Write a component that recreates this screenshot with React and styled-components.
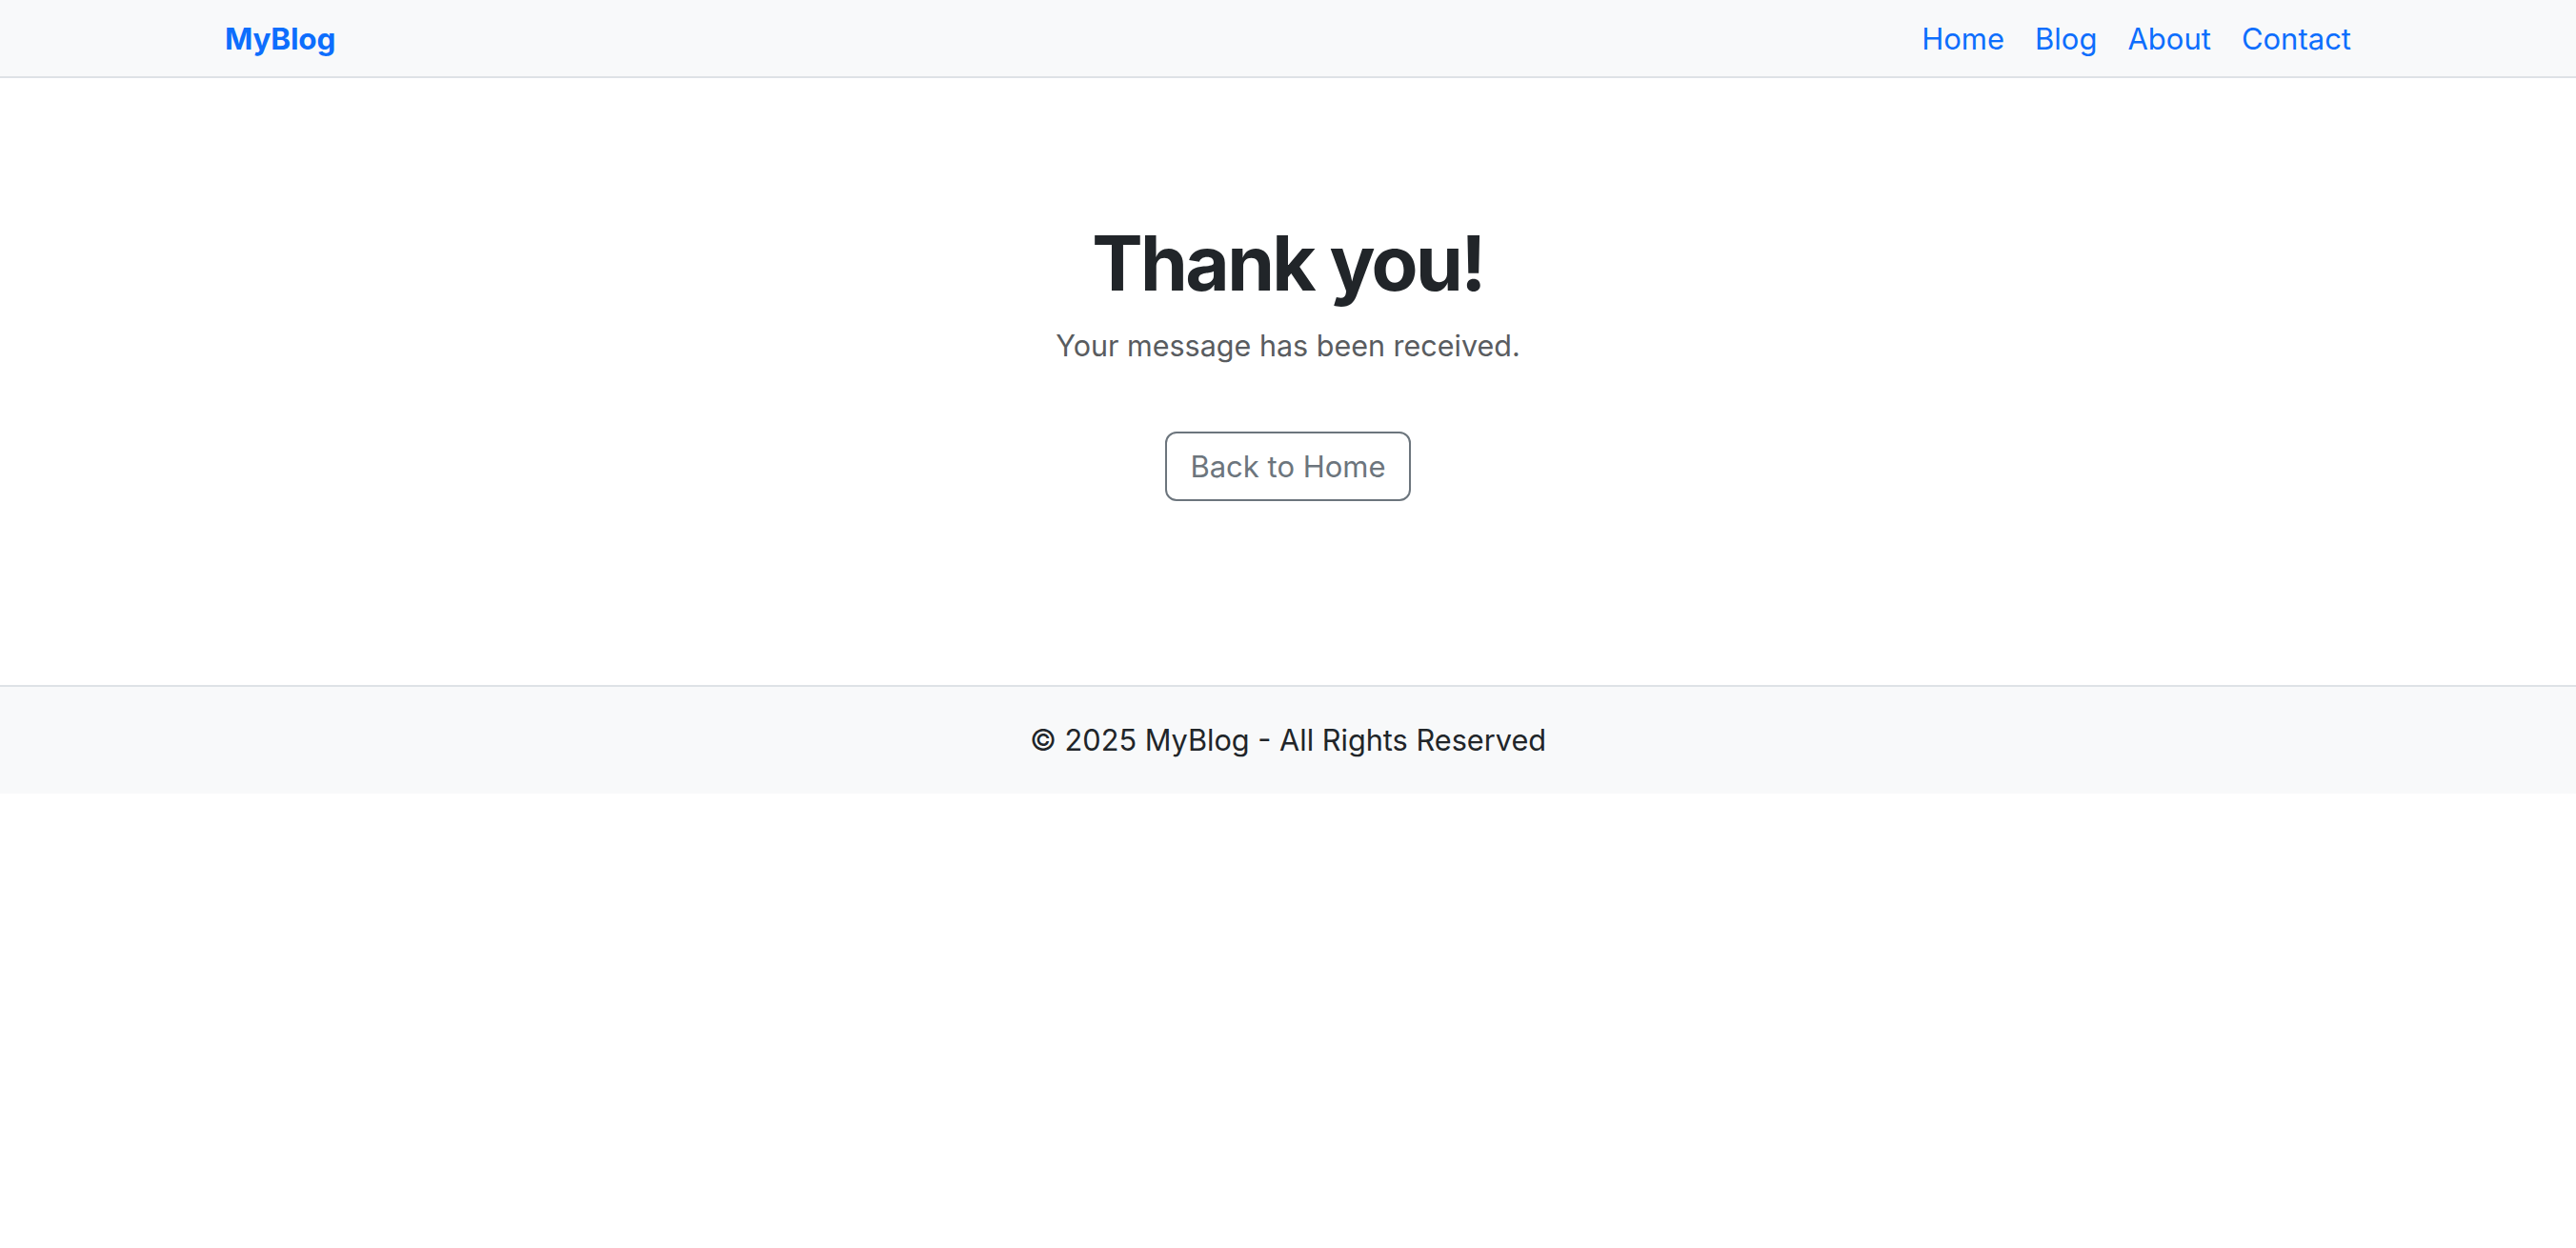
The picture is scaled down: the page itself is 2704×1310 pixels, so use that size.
import React from "react";
import styled, { createGlobalStyle } from "styled-components";

const GlobalStyle = createGlobalStyle`
  body {
    margin: 0;
    font-family: Inter, "Noto Sans", "Liberation Sans", sans-serif;
    color: #212529;
    background: #fff;
  }
  * { box-sizing: border-box; }
`;

const NavBar = styled.header`
  background: #f8f9fa;
  border-bottom: 2px solid #dee2e6;
`;

const Container = styled.div`
  width: 2232px;
  margin: 0 auto;
`;

const NavInner = styled(Container)`
  height: 80px;
  display: flex;
  justify-content: space-between;
  align-items: center;
`;

const Brand = styled.a`
  font-size: 31.5px;
  font-weight: 700;
  color: #0d6efd;
  text-decoration: none;
  letter-spacing: -0.2px;
`;

const Links = styled.nav`
  display: flex;
  gap: 32px;
`;

const NavLink = styled.a`
  font-size: 31px;
  color: #0d6efd;
  text-decoration: none;
`;

const Main = styled.main`
  padding: 146px 0 193px;
  text-align: center;
`;

const Title = styled.h1`
  margin: 0 0 15px;
  font-size: 80px;
  line-height: 96px;
  font-weight: 700;
  letter-spacing: -2.6px;
  color: #212529;
`;

const Lead = styled.p`
  margin: 0 0 66px;
  font-size: 30.5px;
  line-height: 48px;
  color: #595c5f;
`;

const OutlineButton = styled.a`
  display: inline-block;
  padding: 10px 24px;
  font-size: 31px;
  line-height: 49px;
  color: #6c757d;
  border: 2px solid #6c757d;
  border-radius: 12px;
  text-decoration: none;
`;

const Footer = styled.footer`
  background: #f8f9fa;
  border-top: 2px solid #dee2e6;
  padding: 32px 0;
  text-align: center;
  font-size: 30.7px;
  line-height: 48px;
  color: #212529;
`;

export default function App() {
  return (
    <>
      <GlobalStyle />
      <NavBar>
        <NavInner>
          <Brand href="#">MyBlog</Brand>
          <Links>
            <NavLink href="#">Home</NavLink>
            <NavLink href="#">Blog</NavLink>
            <NavLink href="#">About</NavLink>
            <NavLink href="#">Contact</NavLink>
          </Links>
        </NavInner>
      </NavBar>
      <Main>
        <Title>Thank you!</Title>
        <Lead>Your message has been received.</Lead>
        <OutlineButton href="#">Back to Home</OutlineButton>
      </Main>
      <Footer>© 2025 MyBlog - All Rights Reserved</Footer>
    </>
  );
}
